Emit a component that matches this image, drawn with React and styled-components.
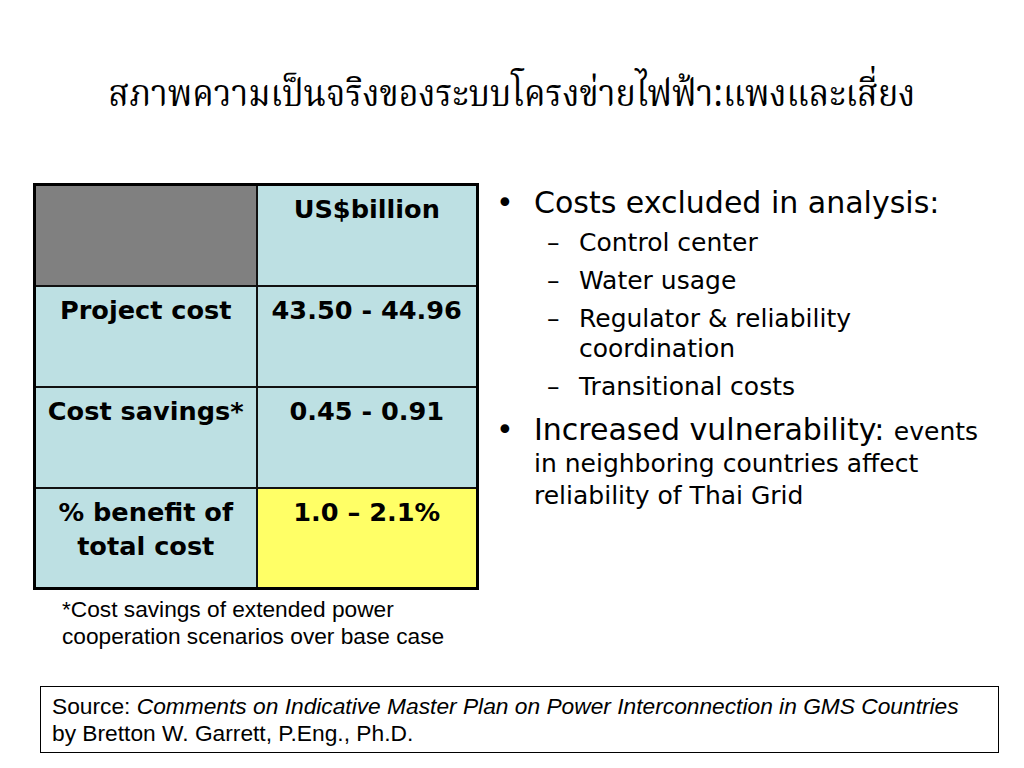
import React from "react";
import styled, { createGlobalStyle } from "styled-components";

const GlobalStyle = createGlobalStyle`
  html, body {
    margin: 0;
    padding: 0;
    background: #fff;
  }
`;

const Slide = styled.div`
  width: 1024px;
  height: 768px;
  background: #fff;
  display: flex;
  flex-direction: column;
  color: #000;
  overflow: hidden;
`;

const Title = styled.h1`
  margin: 0;
  padding-top: 68px;
  height: 112px;
  box-sizing: border-box;
  text-align: center;
  font-family: "Angsana New", "Norasi", "Kinnari", "Noto Serif Thai", "Liberation Serif", serif;
  font-weight: normal;
  font-size: 38px;
  line-height: 56px;
`;

// the original font is a narrow Thai face; squeeze the available one to its width
const TitleText = styled.span`
  display: inline-block;
  transform: scaleX(0.895);
`;

const Body = styled.div`
  display: flex;
  align-items: flex-start;
  padding-top: 71px;
  padding-left: 33px;
`;

const LeftCol = styled.div`
  display: flex;
  flex-direction: column;
`;

const Table = styled.table`
  border-collapse: collapse;
  border: 3px solid #000;
  width: 446px;
  font-family: Tahoma, "DejaVu Sans", sans-serif;
  font-weight: bold;
  font-size: 25.6px;
`;

const Cell = styled.td`
  width: ${p => (p.first ? "222px" : "221px")};
  height: 101px;
  vertical-align: top;
  text-align: center;
  padding: 6px 2px 0;
  box-sizing: border-box;
  border: 2px solid #111;
  line-height: 34px;
  background: ${p => p.bg || "#bde0e3"};
`;

const Footnote = styled.p`
  margin: 6px 0 0 29px;
  font-family: "Liberation Sans", Arial, sans-serif;
  font-size: 22.7px;
  line-height: 27px;
`;

const RightCol = styled.ul`
  list-style: none;
  margin: 4px 0 0 17px;
  padding: 0;
  display: flex;
  flex-direction: column;
  gap: 12px;
  font-family: Tahoma, "DejaVu Sans", sans-serif;
`;

const Bullet = styled.li`
  position: relative;
  padding-left: 38px;
  font-size: 30px;
  line-height: 32px;
  white-space: nowrap;

  &::before {
    content: "•";
    position: absolute;
    left: 0;
    top: 0;
  }
`;

const Small = styled.span`
  font-size: 25px;
  line-height: 24px;
`;

const SubList = styled.ul`
  list-style: none;
  margin: 9px 0 0 0;
  padding: 0;
  display: flex;
  flex-direction: column;
  gap: 8px;
`;

const SubItem = styled.li`
  position: relative;
  padding-left: 45px;
  font-size: 25px;
  line-height: 30px;

  &::before {
    content: "–";
    position: absolute;
    left: 13px;
    top: 0;
  }
`;

const Source = styled.div`
  margin: auto 25px 15px 40px;
  border: 1px solid #000;
  padding: 6px 11px 5px;
  font-family: "Liberation Sans", Arial, sans-serif;
  font-size: 22.75px;
  line-height: 27px;
`;

export default function App() {
  return (
    <>
      <GlobalStyle />
      <Slide>
        <Title>
          <TitleText>สภาพความเป็นจริงของระบบโครงข่ายไฟฟ้า:แพงและเสี่ยง</TitleText>
        </Title>
        <Body>
          <LeftCol>
            <Table>
              <tbody>
                <tr>
                  <Cell first bg="#808080" />
                  <Cell>US$billion</Cell>
                </tr>
                <tr>
                  <Cell first>Project cost</Cell>
                  <Cell>43.50 - 44.96</Cell>
                </tr>
                <tr>
                  <Cell first>Cost savings*</Cell>
                  <Cell>0.45 - 0.91</Cell>
                </tr>
                <tr>
                  <Cell first>% benefit of<br />total cost</Cell>
                  <Cell bg="#ffff66">1.0 – 2.1%</Cell>
                </tr>
              </tbody>
            </Table>
            <Footnote>
              *Cost savings of extended power
              <br />
              cooperation scenarios over base case
            </Footnote>
          </LeftCol>
          <RightCol>
            <Bullet>
              Costs excluded in analysis:
              <SubList>
                <SubItem>Control center</SubItem>
                <SubItem>Water usage</SubItem>
                <SubItem>Regulator &amp; reliability<br />coordination</SubItem>
                <SubItem>Transitional costs</SubItem>
              </SubList>
            </Bullet>
            <Bullet>
              Increased vulnerability: <Small>events<br />in neighboring countries affect<br />reliability of Thai Grid</Small>
            </Bullet>
          </RightCol>
        </Body>
        <Source>
          Source: <i>Comments on Indicative Master Plan on Power Interconnection in GMS Countries</i>
          <br />
          by Bretton W. Garrett, P.Eng., Ph.D.
        </Source>
      </Slide>
    </>
  );
}
